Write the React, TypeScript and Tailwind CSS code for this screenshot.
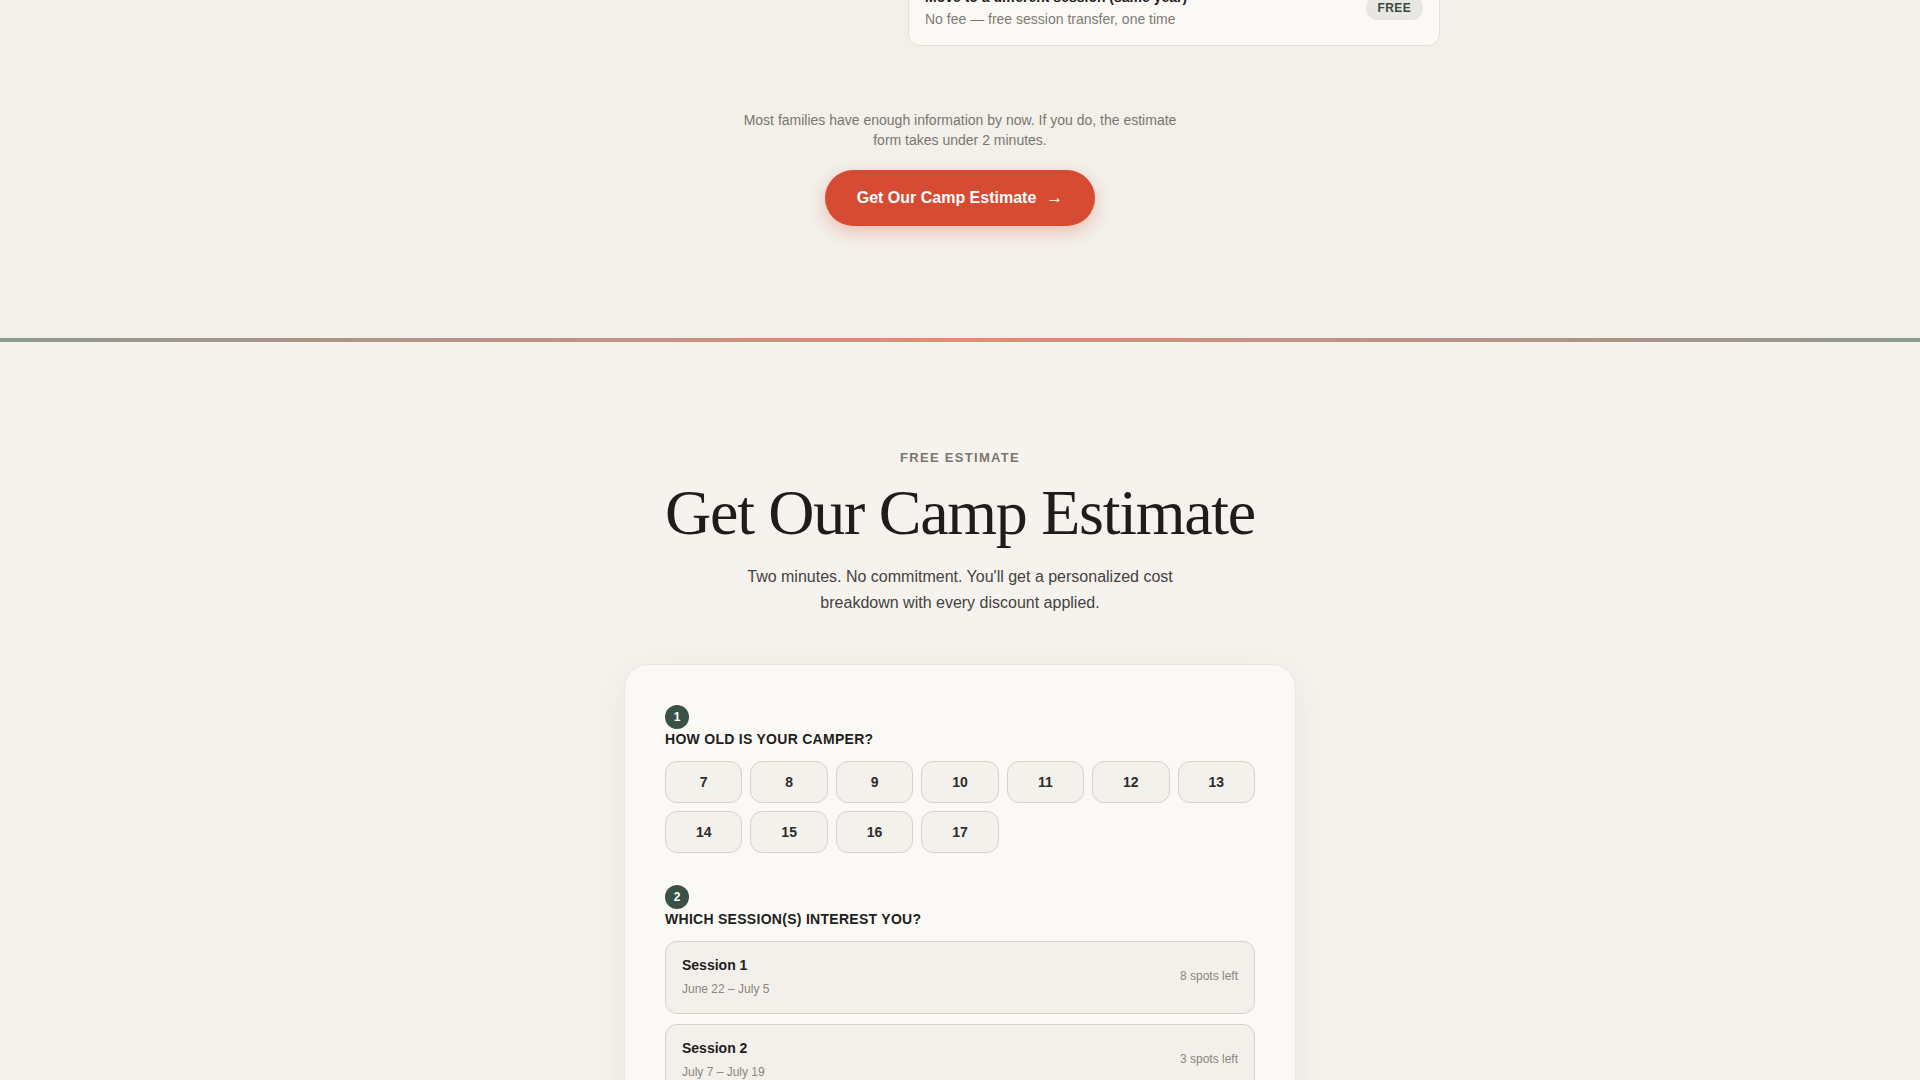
const sans = { fontFamily: '"Liberation Sans", Arial, sans-serif' }
const serif = { fontFamily: '"Liberation Serif", "Times New Roman", serif' }

const ages = [7, 8, 9, 10, 11, 12, 13, 14, 15, 16, 17]

const sessions = [
  { name: 'Session 1', dates: 'June 22 – July 5', spots: '8 spots left' },
  { name: 'Session 2', dates: 'July 7 – July 19', spots: '3 spots left' },
  { name: 'Session 3', dates: 'July 21 – August 2', spots: '12 spots left' },
]

function StepHeading({ n, label }: { n: number; label: string }) {
  return (
    <div className="flex flex-col items-start">
      <span className="flex h-6 w-6 items-center justify-center rounded-full bg-[#3a5148] text-[12px] font-bold text-white">
        {n}
      </span>
      <h3 className="text-[14px] leading-5 font-bold uppercase tracking-[0.02em] text-[#211f1c]">
        {label}
      </h3>
    </div>
  )
}

function PolicyTail() {
  // tail end of the change-policy list, scrolled mostly out of view
  return (
    <section className="bg-[#f3f0ea] pb-28">
      <div className="mx-auto grid max-w-[960px] grid-cols-[1fr_532px] -mt-[30px]">
        <div />
        <div className="rounded-xl border border-[#e4dfd6] bg-[#fbf9f6] px-4 py-4">
          <div className="flex items-center justify-between">
            <div>
              <p className="text-[14px] leading-5 font-bold text-[#1f1d1a]">
                Move to a different session (same year)
              </p>
              <p className="mt-0.5 text-[14px] leading-5 text-[#7d7972]">
                No fee — free session transfer, one time
              </p>
            </div>
            <span className="rounded-full bg-[#e8e6e0] px-3 py-1 text-[12px] leading-4 font-bold tracking-[0.03em] text-[#3a4a42]">
              FREE
            </span>
          </div>
        </div>
      </div>

      <div className="mt-[64px] flex flex-col items-center">
        <p className="max-w-[440px] text-center text-[14px] leading-5 text-[#7a766e]">
          Most families have enough information by now. If you do, the estimate
          form takes under 2 minutes.
        </p>
        <button className="mt-5 flex h-14 items-center gap-2.5 rounded-full bg-[#d84b33] px-8 text-[16px] font-bold text-white shadow-[0_6px_18px_rgba(216,75,51,0.3)]">
          Get Our Camp Estimate
          <span className="text-[17px]">→</span>
        </button>
      </div>
    </section>
  )
}

function EstimateForm() {
  return (
    <div className="mx-auto mt-12 w-[672px] rounded-3xl border border-[#ece7df] bg-[#fbf9f6] px-10 pt-10 pb-12 shadow-[0_10px_40px_rgba(70,55,30,0.08)]">
      <StepHeading n={1} label="How old is your camper?" />
      <div className="mt-3 grid grid-cols-7 gap-2">
        {ages.map((age) => (
          <button
            key={age}
            className="h-[42px] rounded-xl border border-[#d7d2c9] bg-[#f3f1ec] text-[14px] font-bold text-[#2f2d2a]"
          >
            {age}
          </button>
        ))}
      </div>

      <div className="mt-8">
        <StepHeading n={2} label="Which session(s) interest you?" />
      </div>
      <div className="mt-3 flex flex-col gap-2.5">
        {sessions.map((s) => (
          <div
            key={s.name}
            className="flex items-center justify-between rounded-xl border border-[#d7d2c9] bg-[#f3f0eb] px-4 pt-[13px] pb-[16px]"
          >
            <div>
              <p className="text-[14px] leading-5 font-bold text-[#22201d]">{s.name}</p>
              <p className="mt-[6px] text-[12px] leading-4 text-[#8a857d]">{s.dates}</p>
            </div>
            <span className="text-[12px] text-[#8a857d]">{s.spots}</span>
          </div>
        ))}
      </div>
    </div>
  )
}

export default function App() {
  return (
    <div className="min-h-screen bg-[#f6f3ee]" style={sans}>
      <PolicyTail />

      <div className="h-1 bg-linear-to-r from-[#8c9a8e] via-[#e28b79] to-[#8c9a8e]" />

      <section className="bg-[#f6f3ee] pt-[106px] pb-24">
        <div className="flex flex-col items-center text-center">
          <p className="text-[13px] leading-5 font-bold tracking-[0.1em] text-[#7b766b]">
            FREE ESTIMATE
          </p>
          <h2
            className="mt-2.5 text-[64px] leading-[1.1] tracking-[-0.02em] text-[#1f1d1a]"
            style={serif}
          >
            Get Our Camp Estimate
          </h2>
          <p className="mt-4 max-w-[448px] text-[16px] leading-[26px] text-[#454240]">
            Two minutes. No commitment. You'll get a personalized cost breakdown
            with every discount applied.
          </p>
        </div>

        <EstimateForm />
      </section>
    </div>
  )
}
